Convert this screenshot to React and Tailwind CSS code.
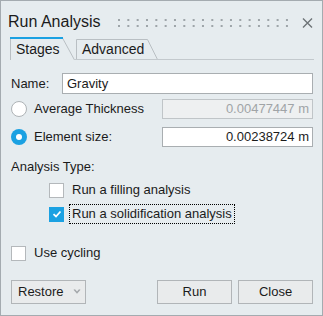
import { useState } from "react";

const FONT = { fontFamily: '"Liberation Sans", Arial, sans-serif' };

function Grip() {
  // two rows of small dots, drag handle
  const dots = [];
  for (let i = 0; i < 19; i++) {
    dots.push(<rect key={"a" + i} x={i * 9.33} y={0} width="2" height="2" fill="#9ea5a9" />);
    dots.push(<rect key={"b" + i} x={i * 9.33} y={6} width="2" height="2" fill="#9ea5a9" />);
  }
  return (
    <svg width="172" height="8" className="block">
      {dots}
    </svg>
  );
}

function Radio({ on }) {
  if (on) {
    return (
      <span className="w-[16px] h-[16px] rounded-full bg-[#1ba1e2] flex items-center justify-center shrink-0">
        <span className="w-[6px] h-[6px] rounded-full bg-white" />
      </span>
    );
  }
  return <span className="w-[16px] h-[16px] rounded-full bg-white border border-[#aeb3b6] shrink-0" />;
}

function Check({ on }) {
  if (on) {
    return (
      <span className="w-[15px] h-[15px] bg-[#1ba1e2] flex items-center justify-center shrink-0">
        <svg width="10" height="8" viewBox="0 0 10 8">
          <path d="M1.5 4.2 L4 6.5 L8.5 1.5" stroke="white" strokeWidth="1.8" fill="none" />
        </svg>
      </span>
    );
  }
  return <span className="w-[15px] h-[15px] bg-white border border-[#b4b8bb] shrink-0" />;
}

export default function App() {
  const [stage, setStage] = useState("element");

  return (
    <div
      style={FONT}
      className="w-[323px] h-[316px] bg-[#e6ecef] border border-[#a4abb0] text-[#1b1b1b] text-[13px] flex flex-col"
    >
      {/* header */}
      <div className="flex items-center h-[20px] mt-[11px] pl-[7px]">
        <span className="text-[16px] leading-[20px]">Run Analysis</span>
        <div className="ml-[17px] mt-[1px]">
          <Grip />
        </div>
        <svg width="11" height="10" viewBox="0 0 11 10" className="ml-[12px] mt-[1px]">
          <path d="M1 0.5 L10 9.5 M10 0.5 L1 9.5" stroke="#6e7377" strokeWidth="1.4" />
        </svg>
      </div>

      {/* tabs */}
      <div className="flex h-[23px] mt-[5px] ml-[9px] mr-[8px]">
        <div className="relative w-[65px] h-[23px] pl-[6px] pt-[3px] text-[14px] leading-[18px]">
          <svg width="65" height="23" className="absolute inset-0">
            <path d="M0.5 23 L0.5 1" stroke="#b9bfc3" fill="none" />
            <path d="M52.5 1 L64.5 23" stroke="#b9bfc3" fill="none" />
            <rect x="0" y="0" width="53" height="2" fill="#1ba1e2" />
          </svg>
          <span className="relative">Stages</span>
        </div>
        <div className="relative w-[83px] h-[23px] pl-[7px] pt-[3px] text-[14px] leading-[18px]">
          <svg width="83" height="23" className="absolute inset-0">
            <path d="M1.5 23 L1.5 2.5 L72.5 2.5 L82.5 22.5" stroke="#b9bfc3" fill="none" />
            <path d="M0 22.5 L83 22.5" stroke="#c3c9cd" fill="none" />
          </svg>
          <span className="relative">Advanced</span>
        </div>
        <div className="flex-1 border-b border-[#c3c9cd]" />
      </div>

      {/* body */}
      <div className="flex flex-col pl-[10px] pr-[9px]">
        <div className="flex items-center h-[21px] mt-[13px]">
          <span className="w-[51px]">Name:</span>
          <div className="flex-1 h-[21px] bg-white border border-[#a9aeb1] flex items-center pl-[4px]">
            Gravity
          </div>
        </div>

        <div className="flex items-center h-[20px] mt-[5px]" onClick={() => setStage("avg")}>
          <Radio on={stage === "avg"} />
          <span className="ml-[7px] w-[128px]">Average Thickness</span>
          <div className="flex-1 h-[20px] bg-[#eef0f1] border border-[#c0c5c8] flex items-center justify-end pr-[3px] text-[#a0a4a7]">
            0.00477447 m
          </div>
        </div>

        <div className="flex items-center h-[20px] mt-[8px]" onClick={() => setStage("element")}>
          <Radio on={stage === "element"} />
          <span className="ml-[7px] w-[128px]">Element size:</span>
          <div className="flex-1 h-[20px] bg-white border border-[#a9aeb1] flex items-center justify-end pr-[3px]">
            0.00238724 m
          </div>
        </div>

        <div className="h-[16px] leading-[16px] mt-[12px]">Analysis Type:</div>

        <div className="flex items-center h-[20px] mt-[5px] pl-[38px]">
          <Check on={false} />
          <span className="ml-[8px]">Run a filling analysis</span>
        </div>

        <div className="flex items-center h-[20px] mt-[4px] pl-[38px]">
          <Check on={true} />
          <span className="ml-[5px] h-[20px] px-[2px] border border-dotted border-black flex items-center">
            Run a solidification analysis
          </span>
        </div>

        <div className="flex items-center h-[20px] mt-[19px]">
          <Check on={false} />
          <span className="ml-[8px]">Use cycling</span>
        </div>

        <div className="flex items-center h-[24px] mt-[17px]">
          <button className="w-[75px] h-[24px] bg-[#e9ebec] border border-[#b1b5b8] flex items-center pl-[6px]">
            <span>Restore</span>
            <svg width="8" height="6" viewBox="0 0 8 6" className="ml-[9px]">
              <path d="M0.5 0.8 L4 4.8 L7.5 0.8 L6 0.3 L4 2.6 L2 0.3 Z" fill="#a3a7aa" />
            </svg>
          </button>
          <button className="w-[75px] h-[24px] ml-auto bg-[#e9ebec] border border-[#b1b5b8]">Run</button>
          <button className="w-[75px] h-[24px] ml-[6px] bg-[#e9ebec] border border-[#b1b5b8]">Close</button>
        </div>
      </div>
    </div>
  );
}
